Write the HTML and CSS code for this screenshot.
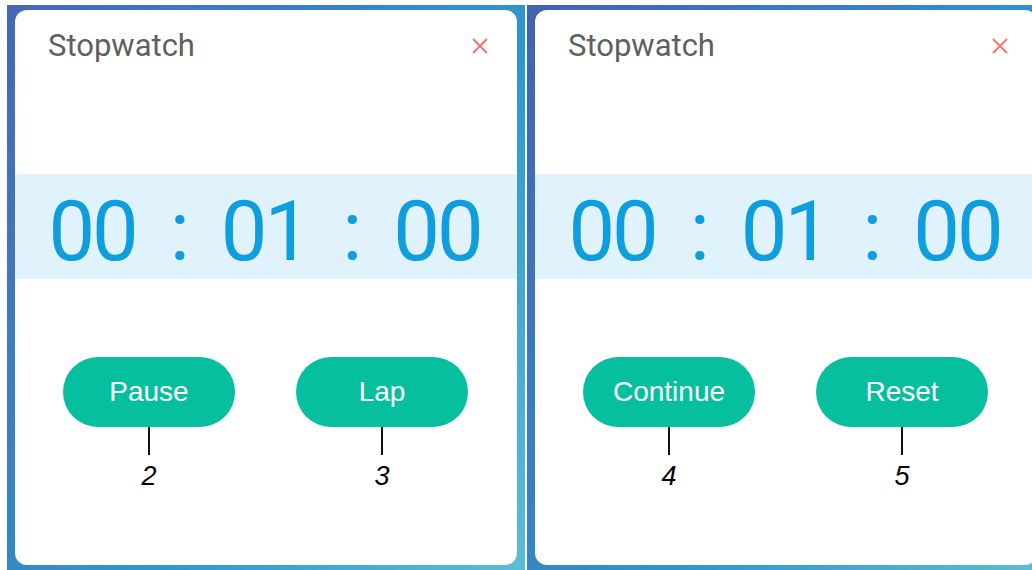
FILE: index.html
```html
<!DOCTYPE html>
<html lang="en">
<head>
    <meta charset="UTF-8">
    <meta name="viewport" content="width=device-width, initial-scale=1.0">
    <title>Stopwatch</title>
    <link rel="stylesheet" href="styles.css">
</head>
<body>
    <div class="screens">
        <div class="screen screen-left">
            <div class="panel">
                <header class="panel-head">
                    <h1>Stopwatch</h1>
                    <svg class="close" width="16" height="16" viewBox="0 0 16 16">
                        <path d="M1 1 L15 15 M15 1 L1 15" stroke="#f3776d" stroke-width="2" fill="none"/>
                    </svg>
                </header>
                <div class="timer">
                    <span class="num">00</span><span class="colon">:</span><span class="num">01</span><span class="colon">:</span><span class="num">00</span>
                </div>
                <div class="actions">
                    <div class="action">
                        <button>Pause</button>
                        <span class="pointer"></span>
                        <span class="callout">2</span>
                    </div>
                    <div class="action">
                        <button>Lap</button>
                        <span class="pointer"></span>
                        <span class="callout">3</span>
                    </div>
                </div>
            </div>
        </div>
        <div class="screen screen-right">
            <div class="panel">
                <header class="panel-head">
                    <h1>Stopwatch</h1>
                    <svg class="close" width="16" height="16" viewBox="0 0 16 16">
                        <path d="M1 1 L15 15 M15 1 L1 15" stroke="#f3776d" stroke-width="2" fill="none"/>
                    </svg>
                </header>
                <div class="timer">
                    <span class="num">00</span><span class="colon">:</span><span class="num">01</span><span class="colon">:</span><span class="num">00</span>
                </div>
                <div class="actions">
                    <div class="action">
                        <button>Continue</button>
                        <span class="pointer"></span>
                        <span class="callout">4</span>
                    </div>
                    <div class="action">
                        <button>Reset</button>
                        <span class="pointer"></span>
                        <span class="callout">5</span>
                    </div>
                </div>
            </div>
        </div>
    </div>
</body>
</html>
```

FILE: styles.css
```css
body {
    margin: 0;
    padding: 0;
    background-color: #fff;
    font-family: Roboto, "Liberation Sans", sans-serif;
    overflow: hidden;
}
.screens {
    display: flex;
    gap: 2px;
    padding: 5px 0 0 7px;
    height: 565px;
    width: 1060px;
}
.screen {
    width: 502px;
    height: 565px;
    padding: 5px 8px 0 8px;
    flex-shrink: 0;
}
.screen-left {
    background: linear-gradient(125deg, #4767b5 0%, #3a82c2 35%, #2d98ce 60%, #5dbdd7 100%);
}
.screen-right {
    background: linear-gradient(125deg, #4262b1 0%, #3a7fc0 35%, #2e96cc 60%, #5fbcd5 100%);
}
.panel {
    background-color: #fff;
    height: 555px;
    border-radius: 12px;
    display: flex;
    flex-direction: column;
}
.panel-head {
    display: flex;
    justify-content: space-between;
    align-items: center;
    padding: 18px 29px 0 33px;
}
.panel-head h1 {
    margin: 0;
    font-size: 31px;
    line-height: 36px;
    font-weight: 400;
    color: #5f5f5f;
}
.close {
    display: block;
}
.timer {
    margin-top: 110px;
    height: 95px;
    padding-top: 10px;
    background-color: #e0f3fc;
    display: flex;
    justify-content: center;
    gap: 31px;
    font-size: 83px;
    line-height: 95px;
    color: #0e9ee0;
}
.timer .num {
    letter-spacing: -3px;
    margin-right: 3px;
}
.actions {
    margin-top: 78px;
    padding: 0 49px 0 48px;
    display: flex;
    justify-content: space-between;
}
.action {
    display: flex;
    flex-direction: column;
    align-items: center;
    width: 172px;
}
.action button {
    width: 172px;
    height: 70px;
    border: none;
    border-radius: 35px;
    background-color: #05bf9e;
    color: #fff;
    font-family: "Liberation Sans", Arial, sans-serif;
    font-size: 28px;
    padding: 0;
}
.pointer {
    width: 2px;
    height: 28px;
    background-color: #111;
}
.callout {
    margin-top: 6px;
    font-family: "Liberation Sans", Arial, sans-serif;
    font-style: italic;
    font-size: 27px;
    line-height: 30px;
    color: #000;
}
```
